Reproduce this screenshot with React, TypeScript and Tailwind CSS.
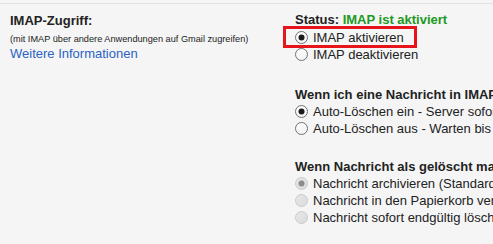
import React from "react";

function Radio({ checked, disabled }: { checked?: boolean; disabled?: boolean }) {
  return (
    <svg width="13" height="13" viewBox="0 0 13 13" className="shrink-0">
      <defs>
        <linearGradient id={disabled ? "gd" : "ge"} x1="0" y1="0" x2="1" y2="1">
          <stop offset="0" stopColor={disabled ? "#e8e8e8" : "#ffffff"} />
          <stop offset="1" stopColor={disabled ? "#dadada" : "#f0f0f0"} />
        </linearGradient>
      </defs>
      <circle
        cx="6.5"
        cy="6.5"
        r="6"
        fill={disabled ? "url(#gd)" : "url(#ge)"}
        stroke={disabled ? "#cacaca" : "#707070"}
        strokeWidth="1"
      />
      {checked && <circle cx="6.5" cy="6.5" r="3" fill={disabled ? "#8c8c8c" : "#1a1a1a"} />}
    </svg>
  );
}

function Row({ checked, disabled, label }: { checked?: boolean; disabled?: boolean; label: string }) {
  return (
    <div className="flex items-center gap-[5px] h-[17px] whitespace-nowrap">
      <Radio checked={checked} disabled={disabled} />
      <span>{label}</span>
    </div>
  );
}

export default function App() {
  return (
    <div
      className="w-[493px] h-[244px] overflow-hidden bg-[#f5f5f5] text-[13px] text-[#222] leading-[17px]"
      style={{ fontFamily: '"Liberation Sans", Arial, sans-serif' }}
    >
      <div className="h-[4px] border-b border-[#e2e2e2]" />
      <div className="flex">
        <div className="w-[295px] shrink-0 pl-[10px] pt-[8px]">
          <div className="font-bold text-[13px] leading-[18px]">IMAP-Zugriff:</div>
          <div className="text-[9.2px] leading-[12px] mt-[3px]">(mit IMAP über andere Anwendungen auf Gmail zugreifen)</div>
          <div className="text-[#2b62c4] leading-[16px] mt-[1px]">Weitere Informationen</div>
        </div>
        <div className="flex-1 min-w-0 whitespace-nowrap pt-[7px]">
          <div className="font-bold leading-[18px]">
            Status: <span className="text-[#229922]">IMAP ist aktiviert</span>
          </div>
          <div className="-ml-[12px] -mt-[3px] inline-flex border-[3px] border-[#e8141b] pl-[9px] pr-[10px] h-[22px] items-center">
            <div className="flex items-center gap-[5px] whitespace-nowrap">
              <Radio checked />
              <span>IMAP aktivieren</span>
            </div>
          </div>
          <div className="-mt-[2px]">
            <Row label="IMAP deaktivieren" />
          </div>

          <div className="font-bold mt-[23px]">Wenn ich eine Nachricht in IMAP als gelöscht markiere:</div>
          <Row checked label="Auto-Löschen ein - Server sofort aktualisieren (Standard)" />
          <Row label="Auto-Löschen aus - Warten bis der Client den Server aktualisiert" />

          <div className="font-bold mt-[21px]">Wenn Nachricht als gelöscht markiert und aus dem letzten sichtbaren IMAP-Ordner verschoben wird:</div>
          <Row checked disabled label="Nachricht archivieren (Standard)" />
          <Row disabled label="Nachricht in den Papierkorb verschieben" />
          <Row disabled label="Nachricht sofort endgültig löschen" />
        </div>
      </div>
    </div>
  );
}
